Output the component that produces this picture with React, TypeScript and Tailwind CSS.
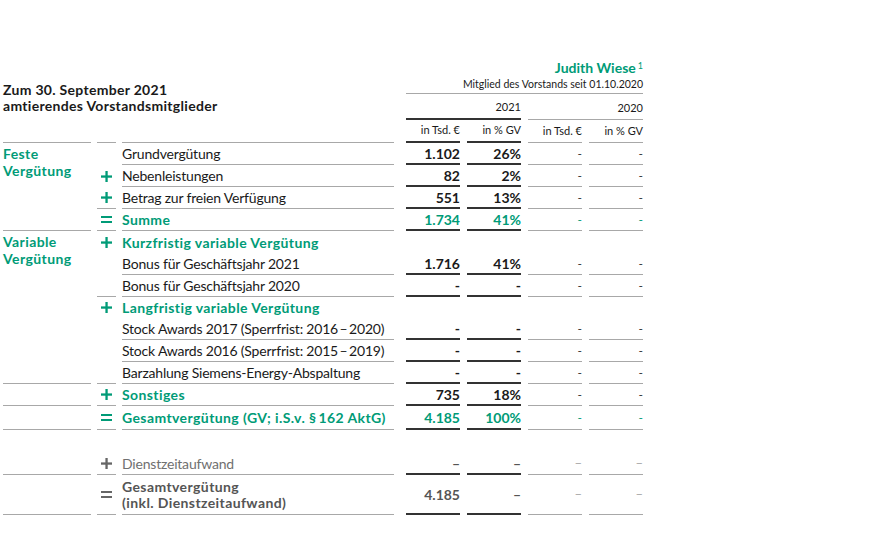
import React from "react";

type Tone = "black" | "green" | "gray";
type Kind = "normal" | "green" | "gray" | "grayBold";

type Row = {
  sign?: "+" | "=";
  label: React.ReactNode;
  kind: Kind;
  vals?: [string, string, string, string];
  tone?: Tone;
  line: boolean;
  signLine: boolean;
  h?: string;
};

const GRAY_LINE = "border-[#a8a8a8]";
const DARK_LINE = "border-[#333]";

function Sign({ type, gray }: { type?: "+" | "="; gray?: boolean }) {
  if (!type) return null;
  const color = gray ? "#666" : "#009b77";
  if (type === "+") {
    return (
      <svg width="11" height="11" viewBox="0 0 11 11">
        <rect x="4.4" y="0" width="2.3" height="11" fill={color} />
        <rect x="0" y="4.4" width="11" height="2.3" fill={color} />
      </svg>
    );
  }
  return (
    <svg width="11" height="7" viewBox="0 0 11 7">
      <rect x="0" y="0" width="11" height="2" fill={color} />
      <rect x="0" y="5" width="11" height="2" fill={color} />
    </svg>
  );
}

function BodyRow({ row }: { row: Row }) {
  const h = row.h ?? "h-[22px]";
  const labelCls =
    row.kind === "green"
      ? "font-bold tracking-[0.4px] text-[#009b77]"
      : row.kind === "gray"
        ? "tracking-[-0.2px] text-[#707070]"
        : row.kind === "grayBold"
          ? "font-bold tracking-[0.4px] text-[#555] leading-[16px]"
          : "tracking-[-0.2px] text-[#1a1a1a]";

  const big =
    row.tone === "green"
      ? "font-bold text-[#009b77]"
      : row.tone === "gray"
        ? "font-bold text-[#555]"
        : "font-bold text-[#1a1a1a]";
  const small =
    row.tone === "green"
      ? "text-[12px] text-[#009b77]"
      : row.tone === "gray"
        ? "text-[13px] text-[#aaa]"
        : "text-[12px] text-[#333]";

  const dl = row.line ? `border-b-2 ${DARK_LINE}` : "";
  const gl = row.line ? `border-b ${GRAY_LINE}` : "";
  const v = row.vals ?? ["", "", "", ""];

  return (
    <div className={`flex ${h}`}>
      <div
        className={`ml-[6px] w-[19px] shrink-0 flex items-center justify-center ${
          row.signLine ? `border-b ${GRAY_LINE}` : ""
        }`}
      >
        <Sign type={row.sign} gray={row.kind === "gray" || row.kind === "grayBold"} />
      </div>
      <div className={`ml-[6px] w-[272px] shrink-0 flex items-center whitespace-nowrap ${gl} ${labelCls}`}>
        <span>{row.label}</span>
      </div>
      <div className={`ml-[12px] w-[54px] shrink-0 flex items-center justify-end ${dl} ${big}`}>
        {v[0]}
      </div>
      <div className={`ml-[7px] w-[54px] shrink-0 flex items-center justify-end ${dl} ${big}`}>
        {v[1]}
      </div>
      <div className={`ml-[7px] w-[54px] shrink-0 flex items-center justify-end ${gl} ${small}`}>
        {v[2]}
      </div>
      <div className={`ml-[7px] w-[54px] shrink-0 flex items-center justify-end ${gl} ${small}`}>
        {v[3]}
      </div>
    </div>
  );
}

function Section({ title, rows }: { title?: string[]; rows: Row[] }) {
  return (
    <div className="flex">
      <div
        className={`w-[88px] shrink-0 border-b ${GRAY_LINE} pt-[2px] font-bold tracking-[0.4px] leading-[17px] text-[#009b77]`}
      >
        {title?.map((t) => (
          <div key={t}>{t}</div>
        ))}
      </div>
      <div className="flex flex-col">
        {rows.map((r, i) => (
          <BodyRow key={i} row={r} />
        ))}
      </div>
    </div>
  );
}

const dash4: [string, string, string, string] = ["-", "-", "-", "-"];

const feste: Row[] = [
  { label: "Grundvergütung", kind: "normal", vals: ["1.102", "26%", "-", "-"], tone: "black", line: true, signLine: false },
  { sign: "+", label: "Nebenleistungen", kind: "normal", vals: ["82", "2%", "-", "-"], tone: "black", line: true, signLine: false },
  { sign: "+", label: "Betrag zur freien Verfügung", kind: "normal", vals: ["551", "13%", "-", "-"], tone: "black", line: true, signLine: true },
  { sign: "=", label: "Summe", kind: "green", vals: ["1.734", "41%", "-", "-"], tone: "green", line: true, signLine: true },
];

const variable: Row[] = [
  { sign: "+", label: "Kurzfristig variable Vergütung", kind: "green", line: false, signLine: false },
  { label: "Bonus für Geschäftsjahr 2021", kind: "normal", vals: ["1.716", "41%", "-", "-"], tone: "black", line: true, signLine: false },
  { label: "Bonus für Geschäftsjahr 2020", kind: "normal", vals: dash4, tone: "black", line: true, signLine: true },
  { sign: "+", label: "Langfristig variable Vergütung", kind: "green", line: false, signLine: false, h: "h-[21px]" },
  { label: "Stock Awards 2017 (Sperrfrist: 2016\u2009–\u20092020)", kind: "normal", vals: dash4, tone: "black", line: true, signLine: false },
  { label: "Stock Awards 2016 (Sperrfrist: 2015\u2009–\u20092019)", kind: "normal", vals: dash4, tone: "black", line: true, signLine: false },
  { label: "Barzahlung Siemens-Energy-Abspaltung", kind: "normal", vals: dash4, tone: "black", line: true, signLine: true },
];

const sonstiges: Row = { sign: "+", label: "Sonstiges", kind: "green", vals: ["735", "18%", "-", "-"], tone: "black", line: true, signLine: true };
const gesamt: Row = { sign: "=", label: "Gesamtvergütung (GV; i.S.v. §\u2009162 AktG)", kind: "green", vals: ["4.185", "100%", "-", "-"], tone: "green", line: true, signLine: true, h: "h-[24px]" };

const dienst: Row = { sign: "+", label: "Dienstzeitaufwand", kind: "gray", vals: ["–", "–", "–", "–"], tone: "gray", line: true, signLine: true };
const gesamtInkl: Row = {
  sign: "=",
  label: (
    <>
      Gesamtvergütung
      <br />
      (inkl. Dienstzeitaufwand)
    </>
  ),
  kind: "grayBold",
  vals: ["4.185", "–", "–", "–"],
  tone: "gray",
  line: true,
  signLine: true,
  h: "h-[40px]",
};

export default function App() {
  return (
    <div className="w-[896px] h-[549px] bg-white overflow-hidden pt-[58px] pl-[3px] font-['Lato',sans-serif] text-[14px] text-[#1a1a1a]">
      {/* header */}
      <div className="flex">
        <div className="w-[391px] shrink-0 pt-[24px] font-bold tracking-[0.3px] leading-[16px]">
          <div>Zum 30. September 2021</div>
          <div>amtierendes Vorstandsmitglieder</div>
        </div>
        <div className="ml-[12px] w-[237px] shrink-0">
          <div className="h-[18px] flex items-center justify-end font-bold text-[14px] text-[#009b77]">
            Judith Wiese
            <span className="ml-[2px] text-[9px] font-normal self-start mt-[1px]">1</span>
          </div>
          <div className={`h-[18px] flex items-center justify-end text-[10.5px] border-b ${GRAY_LINE}`}>
            Mitglied des Vorstands seit 01.10.2020
          </div>
          <div className="flex h-[26px] text-[11px]">
            <div className={`w-[115px] flex items-center justify-end pt-[3px] border-b-2 ${DARK_LINE}`}>2021</div>
            <div className={`ml-[7px] w-[115px] flex items-center justify-end pt-[3px] border-b ${GRAY_LINE}`}>2020</div>
          </div>
        </div>
      </div>
      <div className="flex h-[23px] text-[11px]">
        <div className={`w-[88px] shrink-0 border-b ${GRAY_LINE}`} />
        <div className={`ml-[6px] w-[19px] shrink-0 border-b ${GRAY_LINE}`} />
        <div className={`ml-[6px] w-[272px] shrink-0 border-b ${GRAY_LINE}`} />
        <div className={`ml-[12px] w-[54px] shrink-0 flex items-center justify-end border-b-2 ${DARK_LINE}`}>in Tsd. €</div>
        <div className={`ml-[7px] w-[54px] shrink-0 flex items-center justify-end border-b-2 ${DARK_LINE}`}>in % GV</div>
        <div className={`ml-[7px] w-[54px] shrink-0 flex items-center justify-end border-b ${GRAY_LINE}`}>in Tsd. €</div>
        <div className={`ml-[7px] w-[54px] shrink-0 flex items-center justify-end border-b ${GRAY_LINE}`}>in % GV</div>
      </div>

      {/* body */}
      <Section title={["Feste", "Vergütung"]} rows={feste} />
      <Section title={["Variable", "Vergütung"]} rows={variable} />
      <Section rows={[sonstiges]} />
      <Section rows={[gesamt]} />

      <div className="h-[23px]" />
      <Section rows={[dienst]} />
      <Section rows={[gesamtInkl]} />
    </div>
  );
}
